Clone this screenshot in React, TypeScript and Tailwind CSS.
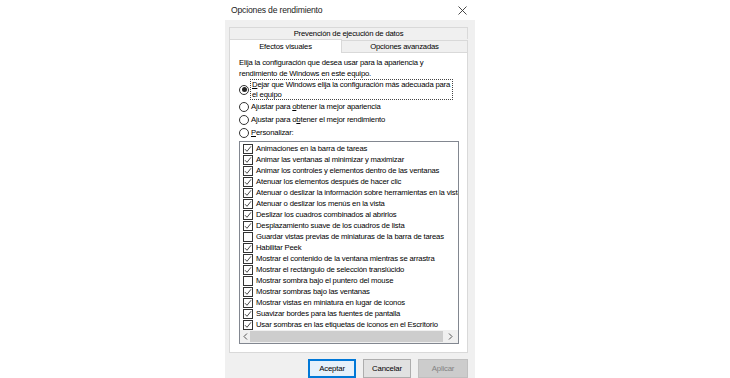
import React from 'react';

const font = { fontFamily: '"Liberation Sans", Arial, sans-serif' };

const options: { label: string; checked: boolean }[] = [
  { label: 'Animaciones en la barra de tareas', checked: true },
  { label: 'Animar las ventanas al minimizar y maximizar', checked: true },
  { label: 'Animar los controles y elementos dentro de las ventanas', checked: true },
  { label: 'Atenuar los elementos después de hacer clic', checked: true },
  { label: 'Atenuar o deslizar la información sobre herramientas en la vista', checked: true },
  { label: 'Atenuar o deslizar los menús en la vista', checked: true },
  { label: 'Deslizar los cuadros combinados al abrirlos', checked: true },
  { label: 'Desplazamiento suave de los cuadros de lista', checked: true },
  { label: 'Guardar vistas previas de miniaturas de la barra de tareas', checked: false },
  { label: 'Habilitar Peek', checked: true },
  { label: 'Mostrar el contenido de la ventana mientras se arrastra', checked: true },
  { label: 'Mostrar el rectángulo de selección translúcido', checked: true },
  { label: 'Mostrar sombra bajo el puntero del mouse', checked: false },
  { label: 'Mostrar sombras bajo las ventanas', checked: true },
  { label: 'Mostrar vistas en miniatura en lugar de iconos', checked: true },
  { label: 'Suavizar bordes para las fuentes de pantalla', checked: true },
  { label: 'Usar sombras en las etiquetas de iconos en el Escritorio', checked: true },
];

function Radio({ selected }: { selected?: boolean }) {
  return (
    <span className="flex h-[10px] w-[10px] shrink-0 items-center justify-center rounded-full border border-[#333]">
      {selected && <span className="h-[5px] w-[5px] rounded-full bg-[#222]" />}
    </span>
  );
}

function Checkbox({ checked }: { checked: boolean }) {
  return (
    <span className="flex h-[10px] w-[10px] shrink-0 items-center justify-center border border-[#333] bg-white">
      {checked && (
        <svg width="8" height="8" viewBox="0 0 8 8">
          <path d="M1 4.2 L3 6.3 L7 1.3" fill="none" stroke="#333" strokeWidth="0.9" />
        </svg>
      )}
    </span>
  );
}

export default function App() {
  return (
    <div className="h-[378px] w-[730px] overflow-hidden bg-white pl-[225px] text-[7.7px] leading-[11px] tracking-[-0.18px] text-black" style={font}>
      <div className="w-[250px]">
        {/* title bar */}
        <div className="flex h-[20px] items-center justify-between pl-[6px] pr-[8px]">
          <span className="text-[8.6px] text-[#222]">Opciones de rendimiento</span>
          <svg width="9" height="9" viewBox="0 0 9 9">
            <path d="M0.5 0.5 L8.5 8.5 M8.5 0.5 L0.5 8.5" stroke="#333" strokeWidth="0.9" />
          </svg>
        </div>

        <div className="h-[358px] bg-[#f0f0f0] pl-[4px] pr-[7px] pt-[7px]">
          {/* tabs */}
          <div className="flex h-[12px] items-center justify-center border border-b-0 border-[#d9d9d9] bg-[#f0f0f0]">
            Prevención de ejecución de datos
          </div>
          <div className="flex h-[14px] items-stretch">
            <div className="relative z-10 flex w-[113px] items-center justify-center border border-b-0 border-[#d9d9d9] bg-white">
              Efectos visuales
            </div>
            <div className="mt-[1px] flex flex-1 items-center justify-center border border-l-0 border-[#d9d9d9] bg-[#f0f0f0]">
              Opciones avanzadas
            </div>
          </div>

          {/* panel */}
          <div className="-mt-px h-[301px] border border-[#d9d9d9] bg-white pl-[9px] pr-[8px] pt-[4px]">
            <p>
              Elija la configuración que desea usar para la apariencia y
              <br />
              rendimiento de Windows en este equipo.
            </p>

            <div className="flex items-center">
              <Radio selected />
              <div className="ml-[1px] w-[203px] whitespace-nowrap border border-dotted border-[#444] px-[1px] leading-[9.5px]">
                <span className="underline">D</span>ejar que Windows elija la configuración más adecuada para
                <br />
                el equipo
              </div>
            </div>
            <div className="flex h-[13px] items-center gap-[2px]">
              <Radio />
              <span>
                Ajustar para <span className="underline">o</span>btener la mejor apariencia
              </span>
            </div>
            <div className="flex h-[13px] items-center gap-[2px]">
              <Radio />
              <span>
                Ajustar para o<span className="underline">b</span>tener el mejor rendimiento
              </span>
            </div>
            <div className="flex h-[13px] items-center gap-[2px]">
              <Radio />
              <span>
                <span className="underline">P</span>ersonalizar:
              </span>
            </div>

            {/* list */}
            <div className="mt-[2px] w-[220px] border border-[#828790] bg-white">
              <div className="overflow-hidden pl-[3px] pt-[1px]">
                {options.map((o) => (
                  <div key={o.label} className="flex h-[11px] items-center gap-[3px] whitespace-nowrap">
                    <Checkbox checked={o.checked} />
                    <span>{o.label}</span>
                  </div>
                ))}
              </div>
              <div className="flex h-[13px] items-center bg-[#f0f0f0]">
                <span className="flex w-[10px] justify-center">
                  <svg width="5" height="7" viewBox="0 0 5 7">
                    <path d="M4 0.5 L1 3.5 L4 6.5" fill="none" stroke="#555" strokeWidth="1" />
                  </svg>
                </span>
                <span className="h-[11px] flex-1 bg-[#cdcdcd]" />
                <span className="flex w-[15px] justify-center">
                  <svg width="5" height="7" viewBox="0 0 5 7">
                    <path d="M1 0.5 L4 3.5 L1 6.5" fill="none" stroke="#555" strokeWidth="1" />
                  </svg>
                </span>
              </div>
            </div>
          </div>

          {/* buttons */}
          <div className="mt-[6px] flex justify-end gap-[7px]">
            <button className="h-[19px] w-[48px] border-2 border-[#0078d7] bg-[#e5f1fb] text-[7.8px] text-black" style={font}>
              Aceptar
            </button>
            <button className="h-[19px] w-[48px] border border-[#adadad] bg-[#e1e1e1] text-[7.8px] text-black" style={font}>
              Cancelar
            </button>
            <button className="h-[19px] w-[50px] border border-[#bfbfbf] bg-[#cccccc] text-[7.8px] text-[#838383]" style={font}>
              Aplicar
            </button>
          </div>
        </div>
      </div>
    </div>
  );
}
